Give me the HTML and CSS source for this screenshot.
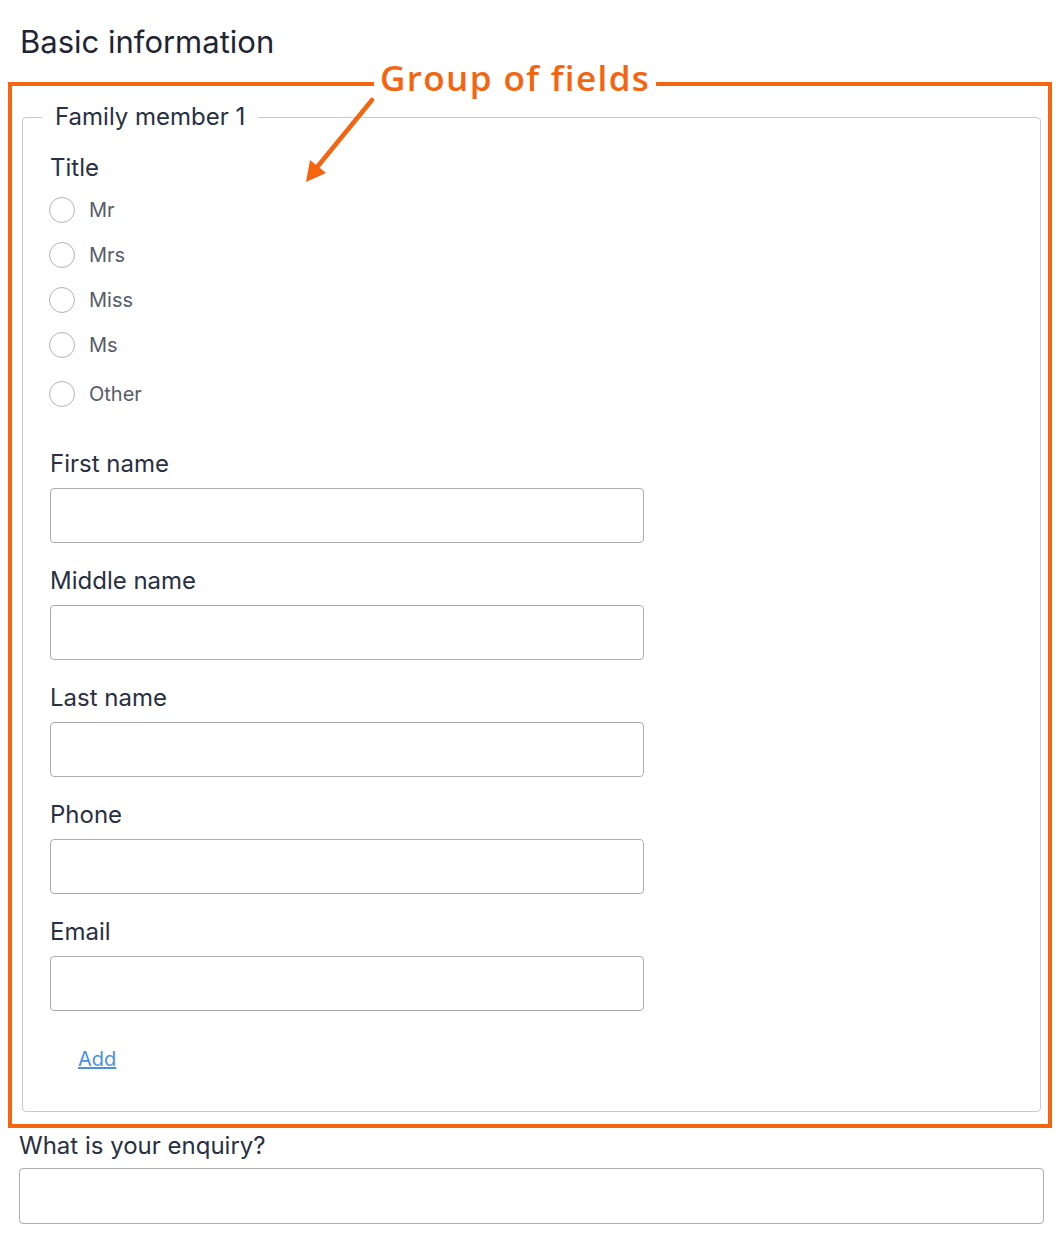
FILE: index.html
```html
<!DOCTYPE html>
<html>
<head>
    <title>Basic information</title>
    <link rel="stylesheet" href="styles.css">
</head>
<body>
    <main class="page">
        <h2 class="section-title">Basic information</h2>

        <div class="callout">
            <span class="callout-label">Group of fields</span>
            <svg class="callout-arrow" width="80" height="100" viewBox="0 0 80 100">
                <line x1="64" y1="14" x2="10" y2="80" stroke="#f5640f" stroke-width="4.5" stroke-linecap="round"/>
                <polygon points="-2,96 2,74 18,87" fill="#f5640f"/>
            </svg>

            <fieldset class="group">
                <legend>Family member 1</legend>

                <div class="field-label">Title</div>
                <div class="radio-list">
                    <label class="radio-row"><input type="radio" name="title"> Mr</label>
                    <label class="radio-row"><input type="radio" name="title"> Mrs</label>
                    <label class="radio-row"><input type="radio" name="title"> Miss</label>
                    <label class="radio-row"><input type="radio" name="title"> Ms</label>
                    <label class="radio-row other"><input type="radio" name="title"> Other</label>
                </div>

                <div class="fields">
                    <div class="field">
                        <label class="field-label">First name</label>
                        <input type="text" class="text-input">
                    </div>
                    <div class="field">
                        <label class="field-label">Middle name</label>
                        <input type="text" class="text-input">
                    </div>
                    <div class="field">
                        <label class="field-label">Last name</label>
                        <input type="text" class="text-input">
                    </div>
                    <div class="field">
                        <label class="field-label">Phone</label>
                        <input type="text" class="text-input">
                    </div>
                    <div class="field">
                        <label class="field-label">Email</label>
                        <input type="text" class="text-input">
                    </div>
                </div>

                <a href="#" class="add-link">Add</a>
            </fieldset>
        </div>

        <div class="field enquiry">
            <label class="field-label">What is your enquiry?</label>
            <input type="text" class="text-input wide">
        </div>
    </main>
</body>
</html>
```

FILE: styles.css
```css
body {
    font-family: Inter, "Noto Sans", sans-serif;
    margin: 0;
    padding: 0;
    background-color: #fff;
    color: #222836;
}

.page {
    padding: 24px 14px 30px 19px;
}

.section-title {
    margin: 0 0 22px 1px;
    font-size: 31px;
    font-weight: 400;
    line-height: 36px;
    color: #1f2533;
}

/* orange annotation box around the group */
.callout {
    position: relative;
    margin: 0 -8px 0 -11px;
    padding: 18px 7px 12px 10px;
    border: 4px solid #f5640f;
}

.callout-label {
    position: absolute;
    top: -30px;
    left: 362px;
    padding: 0 6px;
    background-color: #fff;
    color: #f5640f;
    font-family: "Open Sans", Lato, sans-serif;
    font-size: 35px;
    font-weight: 600;
    line-height: 44px;
    letter-spacing: 1.4px;
}

.callout-arrow {
    position: absolute;
    top: 0;
    left: 296px;
    overflow: visible;
}

.group {
    margin: 0;
    padding: 24px 20px 40px 27px;
    border: 1px solid #c9c9c9;
    border-radius: 4px;
    min-width: 0;
}

.group legend {
    margin-left: -8px;
    padding: 0 13px;
    font-size: 24px;
    line-height: 26px;
    color: #283042;
}

.field-label {
    display: block;
    font-size: 24px;
    line-height: 28px;
    color: #283042;
}

.radio-list {
    display: flex;
    flex-direction: column;
    margin-top: 5px;
}

.radio-row {
    display: flex;
    align-items: center;
    gap: 14px;
    height: 45px;
    font-size: 20px;
    color: #565c68;
}

.radio-row.other {
    margin-top: 4px;
}

.radio-row input {
    appearance: none;
    margin: 0 0 0 -1px;
    width: 26px;
    height: 26px;
    border: 1.5px solid #b3b3b3;
    border-radius: 50%;
    background-color: #fff;
}

.fields {
    display: flex;
    flex-direction: column;
    gap: 24px;
    margin-top: 34px;
}

.field {
    display: flex;
    flex-direction: column;
    gap: 10px;
}

.text-input {
    box-sizing: border-box;
    width: 594px;
    height: 55px;
    margin: 0;
    border: 1px solid #adadad;
    border-radius: 4px;
    background-color: #fff;
}

.text-input.wide {
    width: 100%;
    height: 56px;
}

.add-link {
    display: inline-block;
    margin: 36px 0 0 28px;
    font-size: 20px;
    line-height: 24px;
    color: #4a90e2;
    text-decoration: underline;
}

.enquiry {
    margin-top: 4px;
    gap: 8px;
}
```
